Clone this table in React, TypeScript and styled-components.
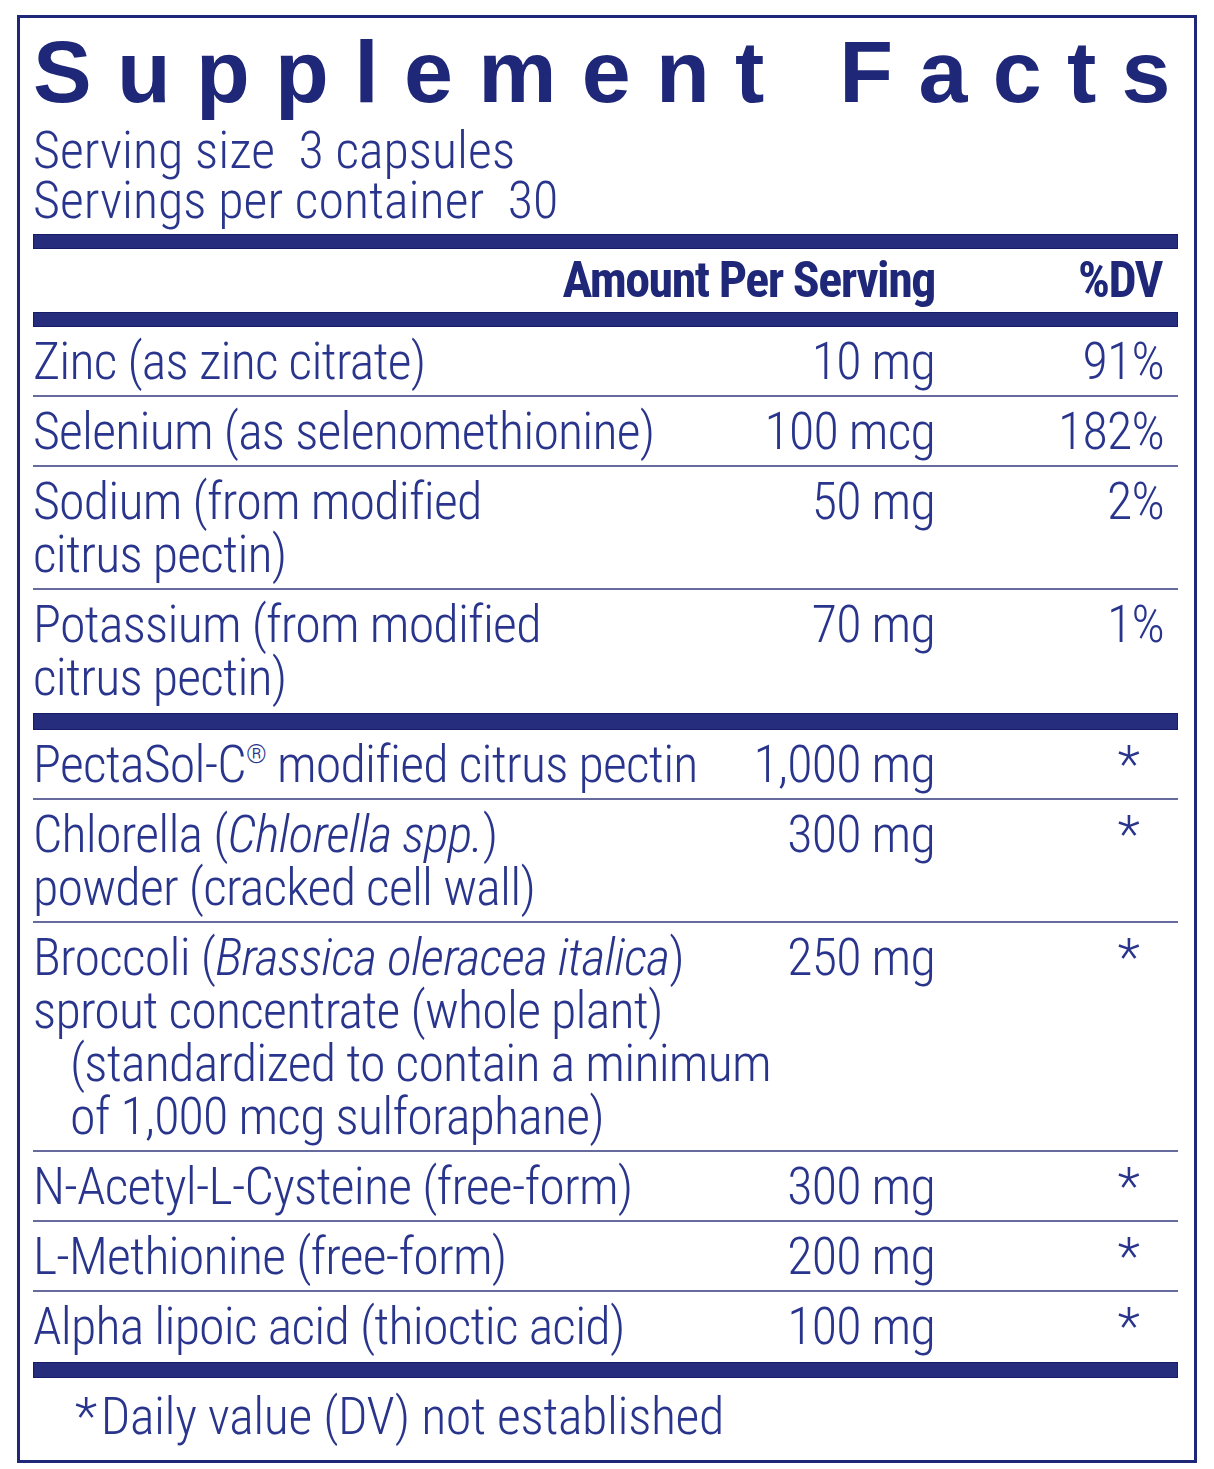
import React from "react"
import styled, { createGlobalStyle } from "styled-components"

const GlobalStyle = createGlobalStyle`
  body {
    margin: 0;
    background: #ffffff;
  }
`

const navy = "#1f2878"
const ink = "#29358c"

const Label = styled.div`
  box-sizing: border-box;
  width: 1180px;
  margin: 15px 0 0 17px;
  border: 3px solid ${navy};
  padding: 0 16px 17px 13px;
  font-family: "Roboto Condensed", "Liberation Sans", Arial, sans-serif;
  font-weight: 300;
  letter-spacing: -0.8px;
  color: ${ink};
`

const Title = styled.h1`
  margin: 10px 0 0 0;
  font-family: "Liberation Sans", Arial, sans-serif;
  font-weight: 700;
  font-size: 88px;
  line-height: 88px;
  letter-spacing: 25.3px;
  color: ${navy};
  white-space: nowrap;
`

const Serving = styled.div`
  margin-top: 10px;
  font-size: 52px;
  line-height: 50px;
  letter-spacing: 0;
  white-space: pre;
`

const Bar = styled.div<{ $h: number; $gap?: number }>`
  height: ${(p) => p.$h}px;
  margin-top: ${(p) => p.$gap ?? 0}px;
  background: #252d7c;
  box-shadow: inset 0 0 0 1px #161c66;
`

const HeaderRow = styled.div`
  display: grid;
  grid-template-columns: 1fr 243px;
  height: 63px;
  line-height: 63px;
  font-size: 50px;
  font-weight: 700;
  letter-spacing: -1.5px;
  color: ${navy};
`

const HeaderCell = styled.div<{ $pad?: number }>`
  text-align: right;
  padding-right: ${(p) => p.$pad ?? 0}px;
  white-space: nowrap;
`

const Row = styled.div<{ $last?: boolean }>`
  display: grid;
  grid-template-columns: 1fr 190px 243px;
  padding: 8px 0 ${(p) => (p.$last ? 9 : 7)}px;
  border-bottom: ${(p) => (p.$last ? "none" : "2px solid #666a9c")};
  font-size: 52px;
  line-height: 53px;
`

const Name = styled.div`
  min-width: 0;
  white-space: nowrap;
`

const Line = styled.div<{ $indent?: boolean }>`
  padding-left: ${(p) => (p.$indent ? 37 : 0)}px;
`

const Amount = styled.div`
  text-align: right;
  white-space: nowrap;
`

const Dv = styled.div<{ $star?: boolean }>`
  text-align: right;
  padding-right: ${(p) => (p.$star ? 39 : 14)}px;
  white-space: nowrap;
`

const Reg = styled.sup`
  font-size: 0.5em;
  vertical-align: 0.72em;
  line-height: 0;
`

const Footer = styled.div`
  padding: 12px 0 0 42px;
  font-size: 52px;
  line-height: 53px;
  letter-spacing: -0.4px;
`

const FootStar = styled.span`
  margin-right: 4px;
`

interface Item {
  name: React.ReactNode[]
  amount: string
  dv: string
}

const top: Item[] = [
  { name: ["Zinc (as zinc citrate)"], amount: "10 mg", dv: "91%" },
  { name: ["Selenium (as selenomethionine)"], amount: "100 mcg", dv: "182%" },
  { name: ["Sodium (from modified", "citrus pectin)"], amount: "50 mg", dv: "2%" },
  { name: ["Potassium (from modified", "citrus pectin)"], amount: "70 mg", dv: "1%" },
]

const bottom: Item[] = [
  {
    name: [
      <>
        PectaSol-C<Reg>®</Reg> modified citrus pectin
      </>,
    ],
    amount: "1,000 mg",
    dv: "*",
  },
  {
    name: [
      <>
        Chlorella (<i>Chlorella spp.</i>)
      </>,
      "powder (cracked cell wall)",
    ],
    amount: "300 mg",
    dv: "*",
  },
  {
    name: [
      <>
        Broccoli (<i>Brassica oleracea italica</i>)
      </>,
      "sprout concentrate (whole plant)",
      "(standardized to contain a minimum",
      "of 1,000 mcg sulforaphane)",
    ],
    amount: "250 mg",
    dv: "*",
  },
  { name: ["N-Acetyl-L-Cysteine (free-form)"], amount: "300 mg", dv: "*" },
  { name: ["L-Methionine (free-form)"], amount: "200 mg", dv: "*" },
  { name: ["Alpha lipoic acid (thioctic acid)"], amount: "100 mg", dv: "*" },
]

const Rows = ({ items }: { items: Item[] }) => (
  <>
    {items.map((item, i) => (
      <Row key={i} $last={i === items.length - 1}>
        <Name>
          {item.name.map((line, j) => (
            <Line key={j} $indent={j >= 2}>
              {line}
            </Line>
          ))}
        </Name>
        <Amount>{item.amount}</Amount>
        <Dv $star={item.dv === "*"}>{item.dv}</Dv>
      </Row>
    ))}
  </>
)

const App = () => {
  return (
    <>
      <GlobalStyle />
      <Label>
        <Title>Supplement Facts</Title>
        <Serving>
          {"Serving size  3 capsules\nServings per container  30"}
        </Serving>
        <Bar $h={15} $gap={8} />
        <HeaderRow>
          <HeaderCell>Amount Per Serving</HeaderCell>
          <HeaderCell $pad={16}>%DV</HeaderCell>
        </HeaderRow>
        <Bar $h={15} />
        <Rows items={top} />
        <Bar $h={17} />
        <Rows items={bottom} />
        <Bar $h={16} />
        <Footer>
          <FootStar>*</FootStar>Daily value (DV) not established
        </Footer>
      </Label>
    </>
  )
}

export default App
